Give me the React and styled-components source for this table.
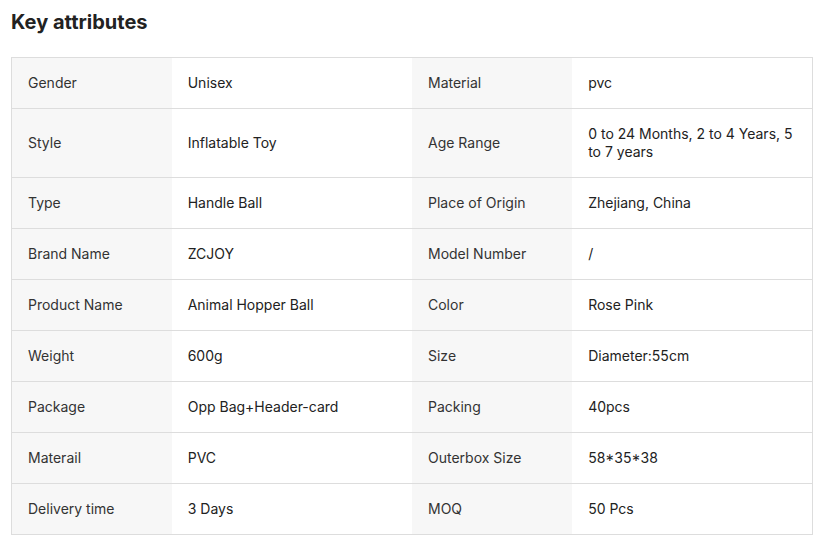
import React from 'react'
import styled, { createGlobalStyle } from 'styled-components'

const Global = createGlobalStyle`
  body {
    margin: 0;
    background: #fff;
    font-family: Inter, "Noto Sans", Arial, sans-serif;
    color: #222;
  }
`

const Wrap = styled.div`
  padding: 8px 15px 0 11px;
`

const Title = styled.h2`
  margin: 0 0 21px;
  font-size: 20px;
  line-height: 28px;
  font-weight: 700;
  color: #222;
`

const Table = styled.table`
  width: 802px;
  border-collapse: collapse;
  table-layout: fixed;
  border: 1px solid #ddd;
`

const Col = styled.col`
  width: ${p => p.$w}px;
`

const Row = styled.tr`
  border-bottom: 1px solid #ddd;
`

const Cell = styled.td`
  padding: 16px;
  font-size: 14px;
  line-height: 18px;
  vertical-align: middle;
  background: ${p => (p.$label ? '#f7f7f7' : '#fff')};
  color: ${p => (p.$label ? '#333' : '#222')};
`

const rows = [
  ['Gender', 'Unisex', 'Material', 'pvc'],
  ['Style', 'Inflatable Toy', 'Age Range', '0 to 24 Months, 2 to 4 Years, 5 to 7 years'],
  ['Type', 'Handle Ball', 'Place of Origin', 'Zhejiang, China'],
  ['Brand Name', 'ZCJOY', 'Model Number', '/'],
  ['Product Name', 'Animal Hopper Ball', 'Color', 'Rose Pink'],
  ['Weight', '600g', 'Size', 'Diameter:55cm'],
  ['Package', 'Opp Bag+Header-card', 'Packing', '40pcs'],
  ['Materail', 'PVC', 'Outerbox Size', '58*35*38'],
  ['Delivery time', '3 Days', 'MOQ', '50 Pcs'],
]

export default function App() {
  return (
    <Wrap>
      <Global />
      <Title>Key attributes</Title>
      <Table>
        <colgroup>
          <Col $w={160} />
          <Col $w={240} />
          <Col $w={160} />
          <Col $w={240} />
        </colgroup>
        <tbody>
          {rows.map((r, i) => (
            <Row key={i}>
              <Cell $label>{r[0]}</Cell>
              <Cell>{r[1]}</Cell>
              <Cell $label>{r[2]}</Cell>
              <Cell>{r[3]}</Cell>
            </Row>
          ))}
        </tbody>
      </Table>
    </Wrap>
  )
}
